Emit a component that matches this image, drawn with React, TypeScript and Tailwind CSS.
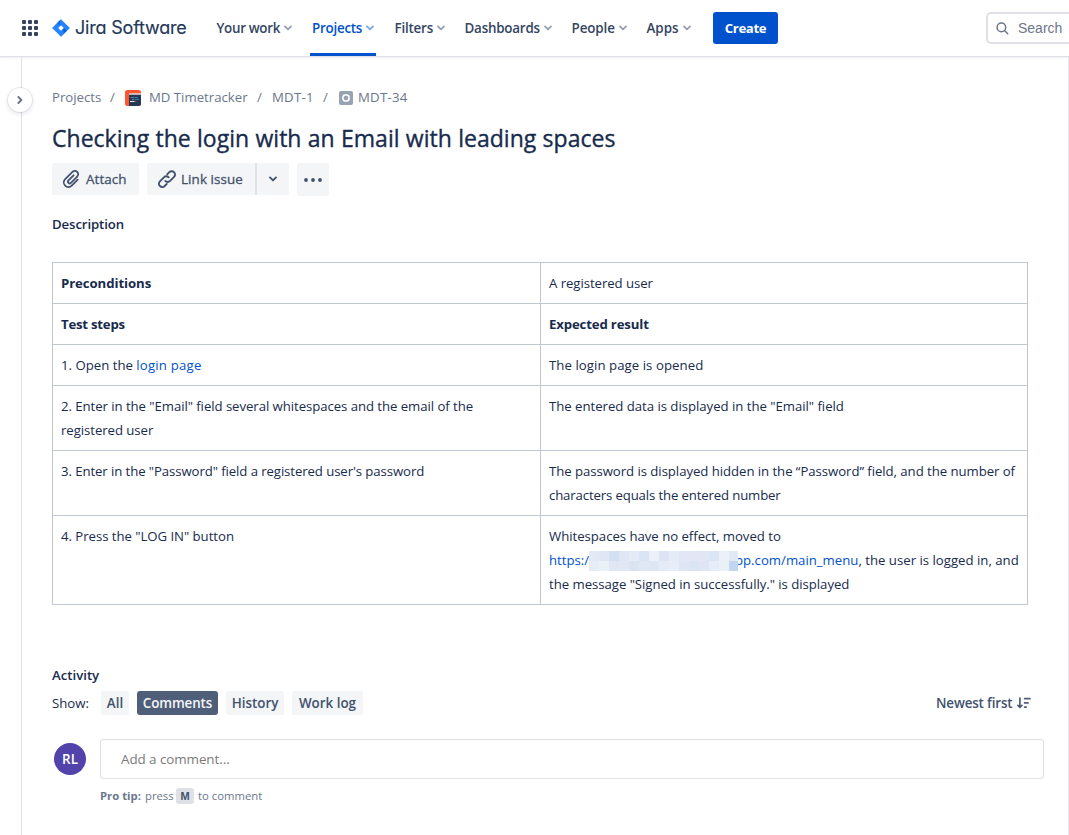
import React from "react";

type NavEntry = { label: string; box: string; tracking: string; active?: boolean };

const navEntries: NavEntry[] = [
  { label: "Your work", box: "w-[96px]", tracking: "tracking-[-0.32px]" },
  { label: "Projects", box: "w-[82px]", tracking: "tracking-[-0.25px]", active: true },
  { label: "Filters", box: "w-[70px]", tracking: "tracking-[-0.2px]" },
  { label: "Dashboards", box: "w-[107px]", tracking: "tracking-[-0.22px]" },
  { label: "People", box: "w-[75px]", tracking: "tracking-[-0.1px]" },
  { label: "Apps", box: "w-[67px]", tracking: "tracking-[0px]" },
];

function Chevron({ className = "" }: { className?: string }) {
  return (
    <svg className={className} width="10" height="8" viewBox="0 0 10 8" fill="none" stroke="currentColor" strokeWidth="1.9" strokeLinecap="round" strokeLinejoin="round">
      <path d="M2 2.4 5 5.4 8 2.4" />
    </svg>
  );
}

function AppSwitcher() {
  const steps = [0, 6, 12];
  return (
    <svg width="16" height="16" viewBox="0 0 16 16" fill="#344563">
      {steps.map((y) => steps.map((x) => <rect key={`${x}-${y}`} x={x} y={y} width="4" height="4" rx="1" />))}
    </svg>
  );
}

function JiraMark() {
  return (
    <svg width="18" height="18" viewBox="0 0 18 18">
      <defs>
        <linearGradient id="jira-a" x1="0.9" y1="0.1" x2="0.4" y2="0.7">
          <stop offset="0.18" stopColor="#0052CC" />
          <stop offset="1" stopColor="#2684FF" />
        </linearGradient>
      </defs>
      <path d="M9 0.2 17.4 8.4Q18 9 17.4 9.6L9 17.8 0.6 9.6Q0 9 0.6 8.4Z" fill="#2684FF" />
      <path d="M9 0.2Q6.9 3.2 9 6.1L6.1 9 3.3 6.1Z" fill="url(#jira-a)" />
      <path d="M9 17.8Q11.1 14.8 9 11.9L11.9 9 14.7 11.9Z" fill="url(#jira-a)" />
      <path d="M9 6.2 11.8 9 9 11.8 6.2 9Z" fill="#fff" />
    </svg>
  );
}

function Header() {
  return (
    <header className="flex h-[57px] shrink-0 items-start border-b border-[#dfe1e6] pl-[22px] shadow-[0_1px_2px_rgba(9,30,66,0.08)]">
      <div className="flex h-14 w-[30px] items-center"><AppSwitcher /></div>
      <div className="flex h-14 w-[164px] items-center">
        <JiraMark />
        <span className="ml-[5px] pb-px font-['Inter',sans-serif] text-[18px] tracking-[-0.2px] text-[#253858] [-webkit-text-stroke:0.15px_#253858] [font-feature-settings:'cv11']">Jira Software</span>
      </div>
      <nav className="flex h-14 w-[497px]">
        {navEntries.map((n) => (
          <div key={n.label} className={`flex h-14 shrink-0 ${n.box}`}>
            <div className={`flex h-14 items-center border-b-[3px] pt-[3px] ${n.active ? "-ml-0.5 w-[66px] border-[#0052cc] pl-[2px] text-[#0052cc]" : "border-transparent pl-[0.5px] text-[#344563]"}`}>
              <span className={`text-[13.4px] font-semibold whitespace-nowrap ${n.tracking}`}>{n.label}</span>
              <Chevron className={`ml-[3px] shrink-0 ${n.active ? "text-[#7fa8e6]" : "text-[#98a1b3]"}`} />
            </div>
          </div>
        ))}
      </nav>
      <button className="mt-3 h-8 w-[65px] rounded-[3px] bg-[#0052cc] pt-px text-[13.2px] font-bold tracking-[-0.4px] text-white">Create</button>
      <div className="mt-3 ml-[208px] flex h-8 w-[83px] shrink-0 items-center rounded-l-[5px] border-2 border-r-0 border-[#dfe1e6] pl-2">
        <svg width="13" height="13" viewBox="0 0 13 13" fill="none" stroke="#6b778c" strokeWidth="1.5" strokeLinecap="round">
          <circle cx="5.4" cy="5.4" r="4.3" />
          <path d="m8.7 8.7 3 3" />
        </svg>
        <span className="ml-[9px] font-['Liberation_Sans',sans-serif] text-[14px] text-[#6b778c]">Search</span>
      </div>
    </header>
  );
}

function ProjectAvatar() {
  return (
    <svg width="16" height="16" viewBox="0 0 16 16">
      <rect width="16" height="16" rx="2.5" fill="#ff5630" />
      <path d="M4 4h12v9.5a2.5 2.5 0 0 1-2.5 2.5H4Z" fill="#253858" />
      <path d="M4 3.2h12v1.6H4Z" fill="#dfd3d6" />
      <path d="M5.5 7.5h4M7 9.5h2" stroke="#6b7890" />
      <path d="M10 7.5h3M9.5 9.5H14" stroke="#2a7fa8" />
      <path d="M5 11.5h4.5" stroke="#fff" />
      <path d="M10 11.5h1.5" stroke="#b0503f" />
    </svg>
  );
}

function Breadcrumbs() {
  return (
    <div className="flex h-5 items-center text-[13.2px] whitespace-nowrap text-[#6b778c]">
      <span className="w-[58px]">Projects</span>
      <span className="w-[15px]">/</span>
      <span className="w-6"><ProjectAvatar /></span>
      <span className="w-[108px]">MD Timetracker</span>
      <span className="w-[15px]">/</span>
      <span className="w-[51px] tracking-[0.25px]">MDT-1</span>
      <span className="w-4">/</span>
      <svg className="mr-[5px]" width="14" height="14" viewBox="0 0 14 14">
        <rect width="14" height="14" rx="2" fill="#97a3b1" />
        <rect x="4" y="4" width="6" height="6" rx="2.4" fill="none" stroke="#fff" strokeWidth="1.6" />
      </svg>
      <span className="tracking-[0.25px]">MDT-34</span>
    </div>
  );
}

function Toolbar() {
  const cell = "flex h-8 items-center bg-[#f4f5f7] text-[13.4px] text-[#42526e] whitespace-nowrap";
  const label = "tracking-[0.1px] [-webkit-text-stroke:0.3px_#42526e]";
  return (
    <div className="mt-[11px] flex h-8">
      <button className={`${cell} w-[87px] rounded-[3px] pl-2.5`}>
        <svg width="19" height="20" viewBox="0 0 19 20" fill="none" stroke="currentColor" strokeWidth="1.8" strokeLinecap="round" strokeLinejoin="round">
          <path d="m11.6 6.3-5.1 5.1a1.7 1.7 0 0 0 2.4 2.5l6.3-6.3a3.3 3.3 0 0 0-4.7-4.7L3.2 10.1a4.6 4.6 0 0 0 6.5 6.6l6-6" />
        </svg>
        <span className={`ml-[5px] ${label}`}>Attach</span>
      </button>
      <button className={`${cell} ml-2 w-[108px] rounded-l-[3px] pl-2.5`}>
        <svg width="20" height="20" viewBox="0 0 20 20" fill="none" stroke="currentColor" strokeWidth="1.9" strokeLinecap="round" strokeLinejoin="round">
          <path d="M8.3 11.9a3.3 3.3 0 0 0 4.8 0l4-4a3.3 3.3 0 0 0-4.8-4.7L10.2 5.3" />
          <path d="M11.7 8.3a3.3 3.3 0 0 0-4.8 0l-4 4a3.3 3.3 0 0 0 4.8 4.7l2.1-2.1" />
        </svg>
        <span className={`ml-[4px] ${label}`}>Link issue</span>
      </button>
      <button className={`${cell} w-[34px] justify-center rounded-r-[3px] border-l-2 border-[#dfe1e6]`}>
        <Chevron />
      </button>
      <button className="ml-2 flex h-[33px] w-8 items-center justify-center rounded-[3px] bg-[#f4f5f7]">
        <svg width="18" height="4" viewBox="0 0 18 4" fill="#42526e">
          <circle cx="2" cy="2" r="1.9" /><circle cx="9" cy="2" r="1.9" /><circle cx="16" cy="2" r="1.9" />
        </svg>
      </button>
    </div>
  );
}

const maskTop = ["#e3e8f5", "#e0e6f3", "#d3e0f1", "#dfe6f4", "#e4eaf6", "#d9e5f4", "#ebf0f9", "#dee4f4", "#e6ecf7", "#e3e7f5", "#e3e7f5", "#e0e6f4", "#dbe6f4", "#ebf0f9", "#e3e8f5"];
const maskBottom = ["#e6edf7", "#ecf1f8", "#e0e6f4", "#e2e7f5", "#dae3f2", "#dfe6f4", "#dfe6f3", "#e6ebf7", "#e8edf8", "#dfe5f3", "#dae5f3", "#dfe5f4", "#e6edf8", "#e9f0f8", "#c4d5ef"];

function MaskedHost() {
  return (
    <span className="relative -mr-[3px] -ml-[5px] inline-grid h-5 w-[149px] grid-cols-[repeat(14,10px)_9px] grid-rows-2 overflow-hidden align-[4px]">
      {[...maskTop, ...maskBottom].map((c, i) => (
        <span key={i} style={{ backgroundColor: c }} />
      ))}
    </span>
  );
}

function StepsTable() {
  const td = "border border-[#c1c7d0] px-2 py-2 align-top leading-6";
  return (
    <table className="mt-7 w-[976px] table-fixed border-collapse text-[13.2px] text-[#172b4d]">
      <tbody>
        <tr>
          <td className={`${td} w-[488px] font-bold`}><span className="tracking-[-0.08px]">Preconditions</span></td>
          <td className={`${td} tracking-[-0.06px]`}>A registered user</td>
        </tr>
        <tr>
          <td className={`${td} font-bold tracking-[-0.22px]`}>Test steps</td>
          <td className={`${td} font-bold tracking-[-0.15px]`}>Expected result</td>
        </tr>
        <tr>
          <td className={td}>1. Open the <a className="tracking-[0.2px] text-[#0052cc]">login page</a></td>
          <td className={`${td} tracking-[0.06px]`}>The login page is opened</td>
        </tr>
        <tr>
          <td className={`${td} tracking-[-0.06px]`}>2. Enter in the "Email" field several whitespaces and the email of the<br />registered user</td>
          <td className={`${td} tracking-[-0.03px]`}>The entered data is displayed in the "Email" field</td>
        </tr>
        <tr>
          <td className={`${td} tracking-[-0.09px]`}>3. Enter in the "Password" field a registered user's password</td>
          <td className={`${td} whitespace-nowrap`}>
            <div className="h-6 tracking-[-0.055px]">The password is displayed hidden in the “Password” field, and the number of</div>
            <div className="h-6 tracking-[-0.14px]">characters equals the entered number</div>
          </td>
        </tr>
        <tr>
          <td className={`${td} tracking-[-0.04px]`}>4. Press the "LOG IN" button</td>
          <td className={`${td} whitespace-nowrap`}>
            <div className="h-6 tracking-[-0.03px]">Whitespaces have no effect, moved to</div>
            <div className="h-6"><a className="text-[#0052cc]">https://<MaskedHost />pp.com/main_menu</a>, the user is logged in, and</div>
            <div className="h-6 tracking-[-0.04px]">the message "Signed in successfully." is displayed</div>
          </td>
        </tr>
      </tbody>
    </table>
  );
}

function Activity() {
  const tab = "flex h-6 items-center justify-center rounded-[3px] pt-px text-[13.4px] font-semibold whitespace-nowrap";
  return (
    <section>
      <h2 className="mt-[60px] h-5 text-[13.2px] leading-5 font-semibold text-[#172b4d]">Activity</h2>
      <div className="mt-1.5 flex h-6 items-center">
        <span className="w-[49px] pt-px text-[13.2px] text-[#172b4d]">Show:</span>
        <div className="flex gap-2">
          <button className={`${tab} w-7 bg-[#f4f5f7] text-[#42526e]`}>All</button>
          <button className={`${tab} w-[81px] bg-[#505f79] tracking-[-0.1px] text-[#f4f5f7]`}>Comments</button>
          <button className={`${tab} w-[58px] bg-[#f4f5f7] text-[#42526e]`}>History</button>
          <button className={`${tab} w-[71px] bg-[#f4f5f7] text-[#42526e]`}>Work log</button>
        </div>
        <div className="ml-auto flex w-[108px] items-center text-[13.4px] font-semibold whitespace-nowrap text-[#42526e]">
          <span className="w-[81px] pt-px tracking-[-0.15px]">Newest first</span>
          <svg width="14" height="12" viewBox="0 0 14 12" fill="none" stroke="#505f79" strokeWidth="1.7" strokeLinecap="round" strokeLinejoin="round">
            <path d="M2.9 1v9M0.9 8.4l2 2 2-2M7.6 1.7h5.4M7.6 5.9h3.4M7.6 10.1h1.6" />
          </svg>
        </div>
      </div>
      <div className="mt-6 flex">
        <div className="mt-1 ml-0.5 flex size-8 items-center justify-center rounded-full bg-[#5243aa] text-[13.4px] font-semibold text-white">RL</div>
        <div className="ml-3.5 w-[944px]">
          <div className="flex h-10 items-center rounded-[3px] border border-[#dfe1e6] pl-5 text-[13.4px] tracking-[-0.06px] text-[#7a7a7a]">Add a comment...</div>
          <div className="mt-2 flex h-[18px] items-center text-[11.3px] whitespace-nowrap text-[#6b778c]">
            <span className="w-[45px] font-bold">Pro tip:</span>
            <span className="w-[31px]">press</span>
            <span className="flex h-4 w-[18px] items-center justify-center rounded-[3px] bg-[#dfe1e6] font-['Liberation_Sans',sans-serif] text-[11px] font-bold text-[#42526e]">M</span>
            <span className="ml-1">to comment</span>
          </div>
        </div>
      </div>
    </section>
  );
}

export default function App() {
  return (
    <div className="flex h-[835px] w-[1069px] flex-col overflow-hidden bg-white font-['Open_Sans','Noto_Sans',sans-serif]">
      <Header />
      <div className="flex flex-1">
        <aside className="relative w-[22px] shrink-0 border-r border-[#dfe1e6]">
          <button className="absolute top-[31px] left-2 flex size-6 items-center justify-center rounded-full bg-white text-[#6b778c] shadow-[0_0_0_1px_rgba(9,30,66,0.08),0_2px_4px_1px_rgba(9,30,66,0.08)]">
            <Chevron className="-rotate-90" />
          </button>
        </aside>
        <main className="w-[1047px] shrink-0 border-r border-[#ebecf0] pt-[31px] pl-[30px]">
          <Breadcrumbs />
          <h1 className="mt-[16px] h-7 text-[23px] leading-7 tracking-[0.02px] [word-spacing:0.3px] whitespace-nowrap text-[#172b4d] [-webkit-text-stroke:0.35px_#172b4d]">Checking the login with an Email with leading spaces</h1>
          <Toolbar />
          <h2 className="mt-[19px] h-5 text-[13.2px] leading-5 font-semibold tracking-[-0.1px] text-[#172b4d]">Description</h2>
          <StepsTable />
          <div className="w-[992px]"><Activity /></div>
        </main>
      </div>
    </div>
  );
}
